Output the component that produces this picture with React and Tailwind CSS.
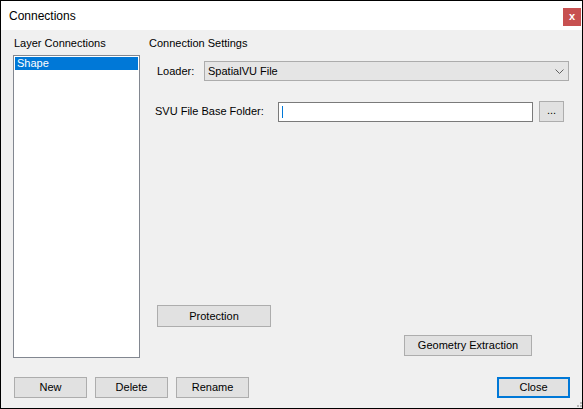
export default function App() {
  const btn =
    "h-[21px] flex items-center justify-center bg-[#e1e1e1] border border-[#adadad] text-black leading-none";
  return (
    <div className="w-[583px] h-[409px] border border-black bg-[#f0f0f0] flex flex-col font-['Liberation_Sans',Arial,sans-serif] text-[11px] text-black relative overflow-hidden">
      {/* Title bar */}
      <div className="h-[29px] bg-white flex items-start justify-between pl-[8px] pr-[1px] shrink-0">
        <span className="text-[12px] leading-[14px] mt-[8px]">Connections</span>
        <div className="mt-[7px] w-[18px] h-[18px] bg-[#c75050] flex items-center justify-center text-white font-bold text-[11px] leading-none pb-[2px]">
          x
        </div>
      </div>

      {/* Body */}
      <div className="flex-1 flex flex-col">
        <div className="flex">
          {/* Layer connections */}
          <div className="pl-[12px] pt-[7px] flex flex-col">
            <span className="leading-[13px] pl-[1px]">Layer Connections</span>
            <div className="mt-[5px] w-[127px] h-[303px] bg-white border border-[#828790] p-[1px]">
              <div className="h-[13px] bg-[#0078d7] text-white leading-[13px] pl-[2px]">Shape</div>
            </div>
          </div>

          {/* Connection settings */}
          <div className="ml-[9px] pt-[7px] flex flex-col">
            <span className="leading-[13px]">Connection Settings</span>

            <div className="mt-[11px] flex items-center">
              <span className="ml-[8px] w-[47px] leading-[13px]">Loader:</span>
              <div className="w-[365px] h-[20px] bg-[#e5e5e5] border border-[#acacac] flex items-center justify-between pl-[3px] pr-[4px]">
                <span className="leading-[13px]">SpatialVU File</span>
                <svg width="9" height="6" viewBox="0 0 9 6" className="mt-[1px]">
                  <polyline points="0.5,0.5 4.5,4.5 8.5,0.5" fill="none" stroke="#606060" strokeWidth="1" />
                </svg>
              </div>
            </div>

            <div className="mt-[20px] flex items-center">
              <span className="ml-[6px] w-[123px] leading-[13px]">SVU File Base Folder:</span>
              <div className="w-[255px] h-[20px] bg-white border border-[#7a7a7a] flex items-center pl-[3px]">
                <div className="w-[1px] h-[12px] bg-[#0078d7]" />
              </div>
              <div className={btn + " ml-[6px] w-[25px] h-[21px] items-end pb-[5px]"}>...</div>
            </div>

            <div className={btn + " mt-[183px] ml-[8px] w-[114px] h-[22px]"}>Protection</div>
            <div className={btn + " mt-[8px] ml-[255px] w-[128px]"}>Geometry Extraction</div>
          </div>
        </div>

        {/* Bottom buttons */}
        <div className="mt-[19px] flex pl-[13px]">
          <div className={btn + " w-[73px]"}>New</div>
          <div className={btn + " w-[73px] ml-[8px]"}>Delete</div>
          <div className={btn + " w-[73px] ml-[8px]"}>Rename</div>
          <div className="ml-[248px] w-[73px] h-[21px] flex items-center justify-center bg-[#e1e1e1] border-2 border-[#0078d7] leading-none">
            Close
          </div>
        </div>
      </div>

      {/* Resize grip */}
      <svg width="7" height="7" viewBox="0 0 7 7" className="absolute right-0 bottom-0">
        <rect x="5" y="1" width="2" height="2" fill="#b8b8b8" />
        <rect x="2" y="4" width="2" height="2" fill="#b8b8b8" />
        <rect x="5" y="4" width="2" height="2" fill="#b8b8b8" />
      </svg>
    </div>
  );
}
